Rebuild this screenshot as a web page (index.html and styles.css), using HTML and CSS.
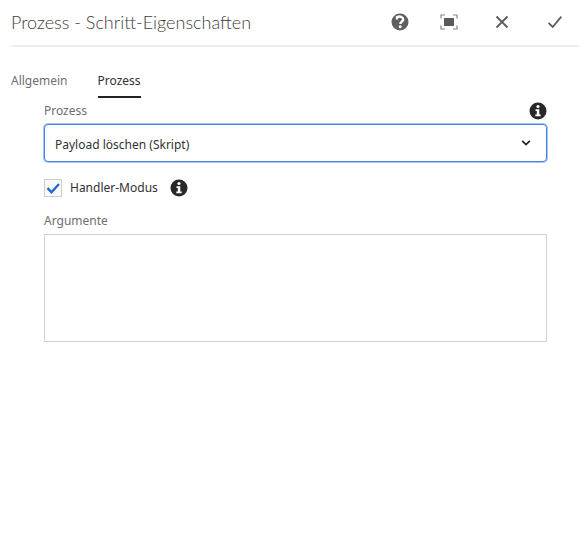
FILE: index.html
```html
<!DOCTYPE html>
<html lang="de">
<head>
<meta charset="utf-8">
<meta name="viewport" content="width=device-width, initial-scale=1">
<title>Prozess - Schritt-Eigenschaften</title>
<link rel="stylesheet" href="styles.css">
</head>
<body>
<main class="dialog">
  <header class="header">
    <h1 class="title">Prozess - Schritt-Eigenschaften</h1>
    <div class="actions">
      <div class="tools">
        <button class="action" type="button" aria-label="Hilfe">
          <svg class="icon" viewBox="0 0 18 18"><circle cx="9" cy="9" r="8.5" fill="#5f5f5f"/><path d="M6 6.4V4.2C9 2.8 12.2 3.8 12.2 6.4C12.2 8.6 9.4 8.6 9.3 11" fill="none" stroke="#fff" stroke-width="2.4"/><circle cx="9.2" cy="13.8" r="1.5" fill="#fff"/></svg>
        </button>
        <button class="action" type="button" aria-label="Vollbild">
          <svg class="icon" viewBox="0 0 18 18"><path d="M4 5h10v8H4z" fill="#5a5a5a"/><path d="M1 5.500V2h4M13 2h4v3.500M17 12.500V16h-4M5 16H1v-3.500" fill="none" stroke="#7d8b87" stroke-width="1.2"/></svg>
        </button>
      </div>
      <button class="action" type="button" aria-label="Abbrechen">
        <svg class="icon" viewBox="0 0 18 18"><path d="M3.5 3.5l11 11M14.5 3.5l-11 11" fill="none" stroke="#5c5c5c" stroke-width="1.8"/></svg>
      </button>
      <button class="action" type="button" aria-label="Fertig">
        <svg class="icon" viewBox="0 0 18 18"><path d="M2.500 9.800l4.200 4.200L15.300 3.600" fill="none" stroke="#5c5c5c" stroke-width="1.8"/></svg>
      </button>
    </div>
  </header>
  <nav class="tabs" role="tablist">
    <button class="tab" type="button" role="tab" aria-selected="false">Allgemein</button>
    <button class="tab tab-active" type="button" role="tab" aria-selected="true">Prozess</button>
  </nav>
  <form class="form">
    <div class="label-row">
      <label class="label" for="process">Prozess</label>
      <svg class="icon" viewBox="0 0 18 18"><circle cx="9" cy="9" r="8.5" fill="#282828"/><circle cx="9" cy="4.500" r="1.6" fill="#fff"/><path d="M6.500 7.200h3.800v5.300h1.400v1.800h-5.400v-1.800h1.500v-3.500H6.500z" fill="#fff"/></svg>
    </div>
    <div class="select-wrap">
      <select class="select" id="process"><option>Payload löschen (Skript)</option></select>
      <svg class="chevron" viewBox="0 0 10 8"><path d="M1.200 1.800L5 5.600l3.800-3.800" fill="none" stroke="#222" stroke-width="1.7"/></svg>
    </div>
    <div class="check-row">
      <input class="check" type="checkbox" id="handler" checked>
      <label class="check-label" for="handler">Handler-Modus</label>
      <svg class="icon" viewBox="0 0 18 18"><circle cx="9" cy="9" r="8.5" fill="#282828"/><circle cx="9" cy="4.500" r="1.6" fill="#fff"/><path d="M6.500 7.200h3.800v5.300h1.400v1.800h-5.400v-1.800h1.500v-3.500H6.500z" fill="#fff"/></svg>
    </div>
    <label class="label" for="arguments">Argumente</label>
    <textarea class="textarea" id="arguments"></textarea>
  </form>
</main>
</body>
</html>
```
FILE: styles.css
```css
* {
  box-sizing: border-box;
}

body {
  margin: 0;
  background: #fff;
  color: #323232;
  font-family: "Noto Sans", "Open Sans", sans-serif;
  font-size: 12px;
  line-height: 20px;
}

button,
select,
textarea {
  font: inherit;
  color: inherit;
}

.dialog {
  padding: 0 9px 0 11px;
}

.header {
  display: flex;
  align-items: center;
  justify-content: space-between;
  height: 47px;
  padding-bottom: 2px;
  border-bottom: 2px solid #eee;
}

.title {
  margin: 0;
  color: #404040;
  font-family: Lato, "Open Sans", sans-serif;
  font-size: 18px;
  font-weight: 300;
  white-space: nowrap;
}

.actions,
.tools {
  display: flex;
}

.actions {
  gap: 35px;
  padding-right: 15px;
}

.tools {
  gap: 31px;
}

.action {
  display: flex;
  padding: 0;
  border: 0;
  background: none;
}

.icon {
  display: block;
  width: 18px;
  height: 18px;
}

.tabs {
  display: flex;
  gap: 30px;
  margin-top: 23px;
}

.tab {
  height: 28px;
  padding: 0 0 4px;
  border: 0;
  border-bottom: 2px solid transparent;
  background: none;
  color: #6e6e6e;
}

.tab-active {
  border-color: #222;
  color: #323232;
}

.form {
  padding: 1px 32px 0 33px;
}

.label {
  display: block;
  color: #6e6e6e;
}

.label-row {
  display: flex;
  align-items: center;
  justify-content: space-between;
  height: 24px;
  margin-bottom: 1px;
}

.select-wrap {
  display: grid;
  align-items: center;
}

.select,
.chevron {
  grid-area: 1 / 1;
}

.select {
  width: 100%;
  height: 38px;
  padding: 4px 10px 0;
  appearance: none;
  border: 1px solid #4a84d8;
  border-radius: 4px;
  outline: 0;
  background: #fff;
  box-shadow: 0 0 0 1px #a6c5f2;
}

.chevron {
  justify-self: end;
  width: 10px;
  height: 8px;
  margin-right: 16px;
  pointer-events: none;
}

.check-row {
  display: flex;
  align-items: center;
  height: 18px;
  margin: 17px 0 14px;
}

.check {
  width: 18px;
  height: 18px;
  margin: 0 8px 0 0;
  appearance: none;
  border: 1px solid #ccc;
  background: #fafafa url("data:image/svg+xml,%3Csvg xmlns='http://www.w3.org/2000/svg' viewBox='0 0 16 16'%3E%3Cpath d='M2.5 8.2l4 4L14 4' fill='none' stroke='%232468c8' stroke-width='2.4'/%3E%3C/svg%3E") center / 16px;
}

.check-label {
  margin-right: 12px;
}

.textarea {
  display: block;
  width: 100%;
  height: 108px;
  margin-top: 3px;
  padding: 8px 10px;
  border: 1px solid #d3d3d3;
  outline: 0;
  resize: none;
}
```
